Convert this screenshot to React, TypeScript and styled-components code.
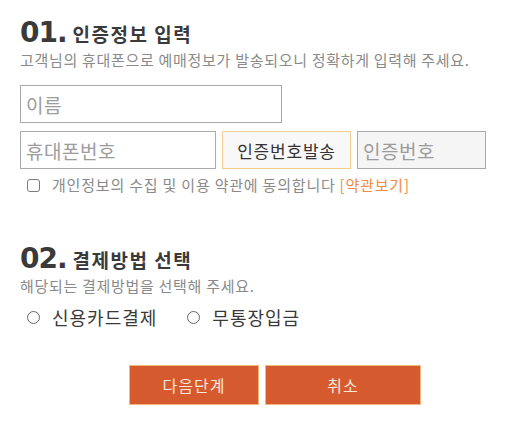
import React, { FC, useState } from 'react';
import styled, { createGlobalStyle } from 'styled-components';

const GlobalStyle = createGlobalStyle`
  body {
    margin: 0;
    background: #fff;
    font-family: 'Noto Sans CJK KR', 'Noto Sans', sans-serif;
  }
`;

const Page = styled.div`
  padding: 18px 20px 0 20px;
  width: 513px;
  box-sizing: border-box;
`;

const Section = styled.section<{ gap?: number }>`
  margin-top: ${p => p.gap || 0}px;
`;

const Heading = styled.h2`
  display: flex;
  align-items: baseline;
  margin: 0;
  color: #3a3a3a;
  line-height: 30px;
`;

const Num = styled.span`
  font-family: 'DejaVu Sans', sans-serif;
  font-size: 28px;
  font-weight: bold;
  letter-spacing: -1px;
  margin-right: 6px;
`;

const HeadText = styled.span`
  font-size: 19px;
  font-weight: bold;
  letter-spacing: 1.5px;
`;

const Desc = styled.p`
  margin: 2px 0 0;
  font-size: 15px;
  line-height: 18px;
  letter-spacing: 0.7px;
  color: #8a8a8a;
`;

const FormInput = styled.input<{ w: number; filled?: boolean }>`
  width: ${p => p.w}px;
  height: 38px;
  box-sizing: border-box;
  border: 1px solid #a9a9a9;
  background: ${p => (p.filled ? '#f5f5f5' : '#fff')};
  padding: 0 5px;
  font-family: inherit;
  font-size: 19px;
  letter-spacing: 0.5px;
  color: #333;
  outline: none;
  &::placeholder {
    color: #9c9c9c;
  }
`;

const NameRow = styled.div`
  margin-top: 16px;
`;

const PhoneRow = styled.div`
  display: flex;
  gap: 6px;
  margin-top: 8px;
`;

const SendButton = styled.button`
  width: 129px;
  height: 38px;
  border: 1px solid #f2cd96;
  background: #f8f8f8;
  font-family: inherit;
  font-size: 17px;
  letter-spacing: 0.8px;
  color: #333;
  padding: 0;
`;

const Agree = styled.label`
  display: flex;
  align-items: center;
  margin-top: 6px;
  padding-left: 7px;
  font-size: 15px;
  line-height: 20px;
  letter-spacing: 0.8px;
  color: #8a8a8a;
`;

const Box = styled.span`
  width: 13px;
  height: 13px;
  box-sizing: border-box;
  border: 1.5px solid #7a7a7a;
  border-radius: 3px;
  margin-right: 12px;
`;

const TermsLink = styled.a`
  color: #f08a45;
  margin-left: 4px;
`;

const Methods = styled.div`
  display: flex;
  align-items: center;
  margin-top: 10px;
  padding-left: 7px;
  gap: 30px;
`;

const Method = styled.label`
  display: flex;
  align-items: center;
  font-size: 18px;
  line-height: 24px;
  letter-spacing: 1px;
  color: #3a3a3a;
  cursor: pointer;
`;

const Circle = styled.span<{ on?: boolean }>`
  width: 13px;
  height: 13px;
  box-sizing: border-box;
  border: 1.5px solid #666;
  border-radius: 50%;
  margin-right: 12px;
  background: ${p => (p.on ? '#666' : '#fff')};
`;

const Actions = styled.div`
  display: flex;
  gap: 6px;
  margin-top: 36px;
  padding-left: 109px;
`;

const ActionButton = styled.button<{ w: number }>`
  width: ${p => p.w}px;
  height: 40px;
  background: #d55b2e;
  border: 1px solid #f3b87e;
  color: #f7e7df;
  font-family: inherit;
  font-size: 16px;
  letter-spacing: 1px;
  padding: 0;
  cursor: pointer;
`;

const App: FC = () => {
  const [method, setMethod] = useState<string>('');

  return (
    <Page>
      <GlobalStyle />
      <Section>
        <Heading>
          <Num>01.</Num>
          <HeadText>인증정보 입력</HeadText>
        </Heading>
        <Desc>고객님의 휴대폰으로 예매정보가 발송되오니 정확하게 입력해 주세요.</Desc>
        <NameRow>
          <FormInput w={262} placeholder="이름" />
        </NameRow>
        <PhoneRow>
          <FormInput w={196} placeholder="휴대폰번호" />
          <SendButton>인증번호발송</SendButton>
          <FormInput w={129} filled placeholder="인증번호" />
        </PhoneRow>
        <Agree>
          <Box />
          개인정보의 수집 및 이용 약관에 동의합니다
          <TermsLink>[약관보기]</TermsLink>
        </Agree>
      </Section>

      <Section gap={49}>
        <Heading>
          <Num>02.</Num>
          <HeadText>결제방법 선택</HeadText>
        </Heading>
        <Desc>해당되는 결제방법을 선택해 주세요.</Desc>
        <Methods>
          <Method onClick={() => setMethod('card')}>
            <Circle on={method === 'card'} />
            신용카드결제
          </Method>
          <Method onClick={() => setMethod('bank')}>
            <Circle on={method === 'bank'} />
            무통장입금
          </Method>
        </Methods>
      </Section>

      <Actions>
        <ActionButton w={130}>다음단계</ActionButton>
        <ActionButton w={156}>취소</ActionButton>
      </Actions>
    </Page>
  );
};

export default App;
